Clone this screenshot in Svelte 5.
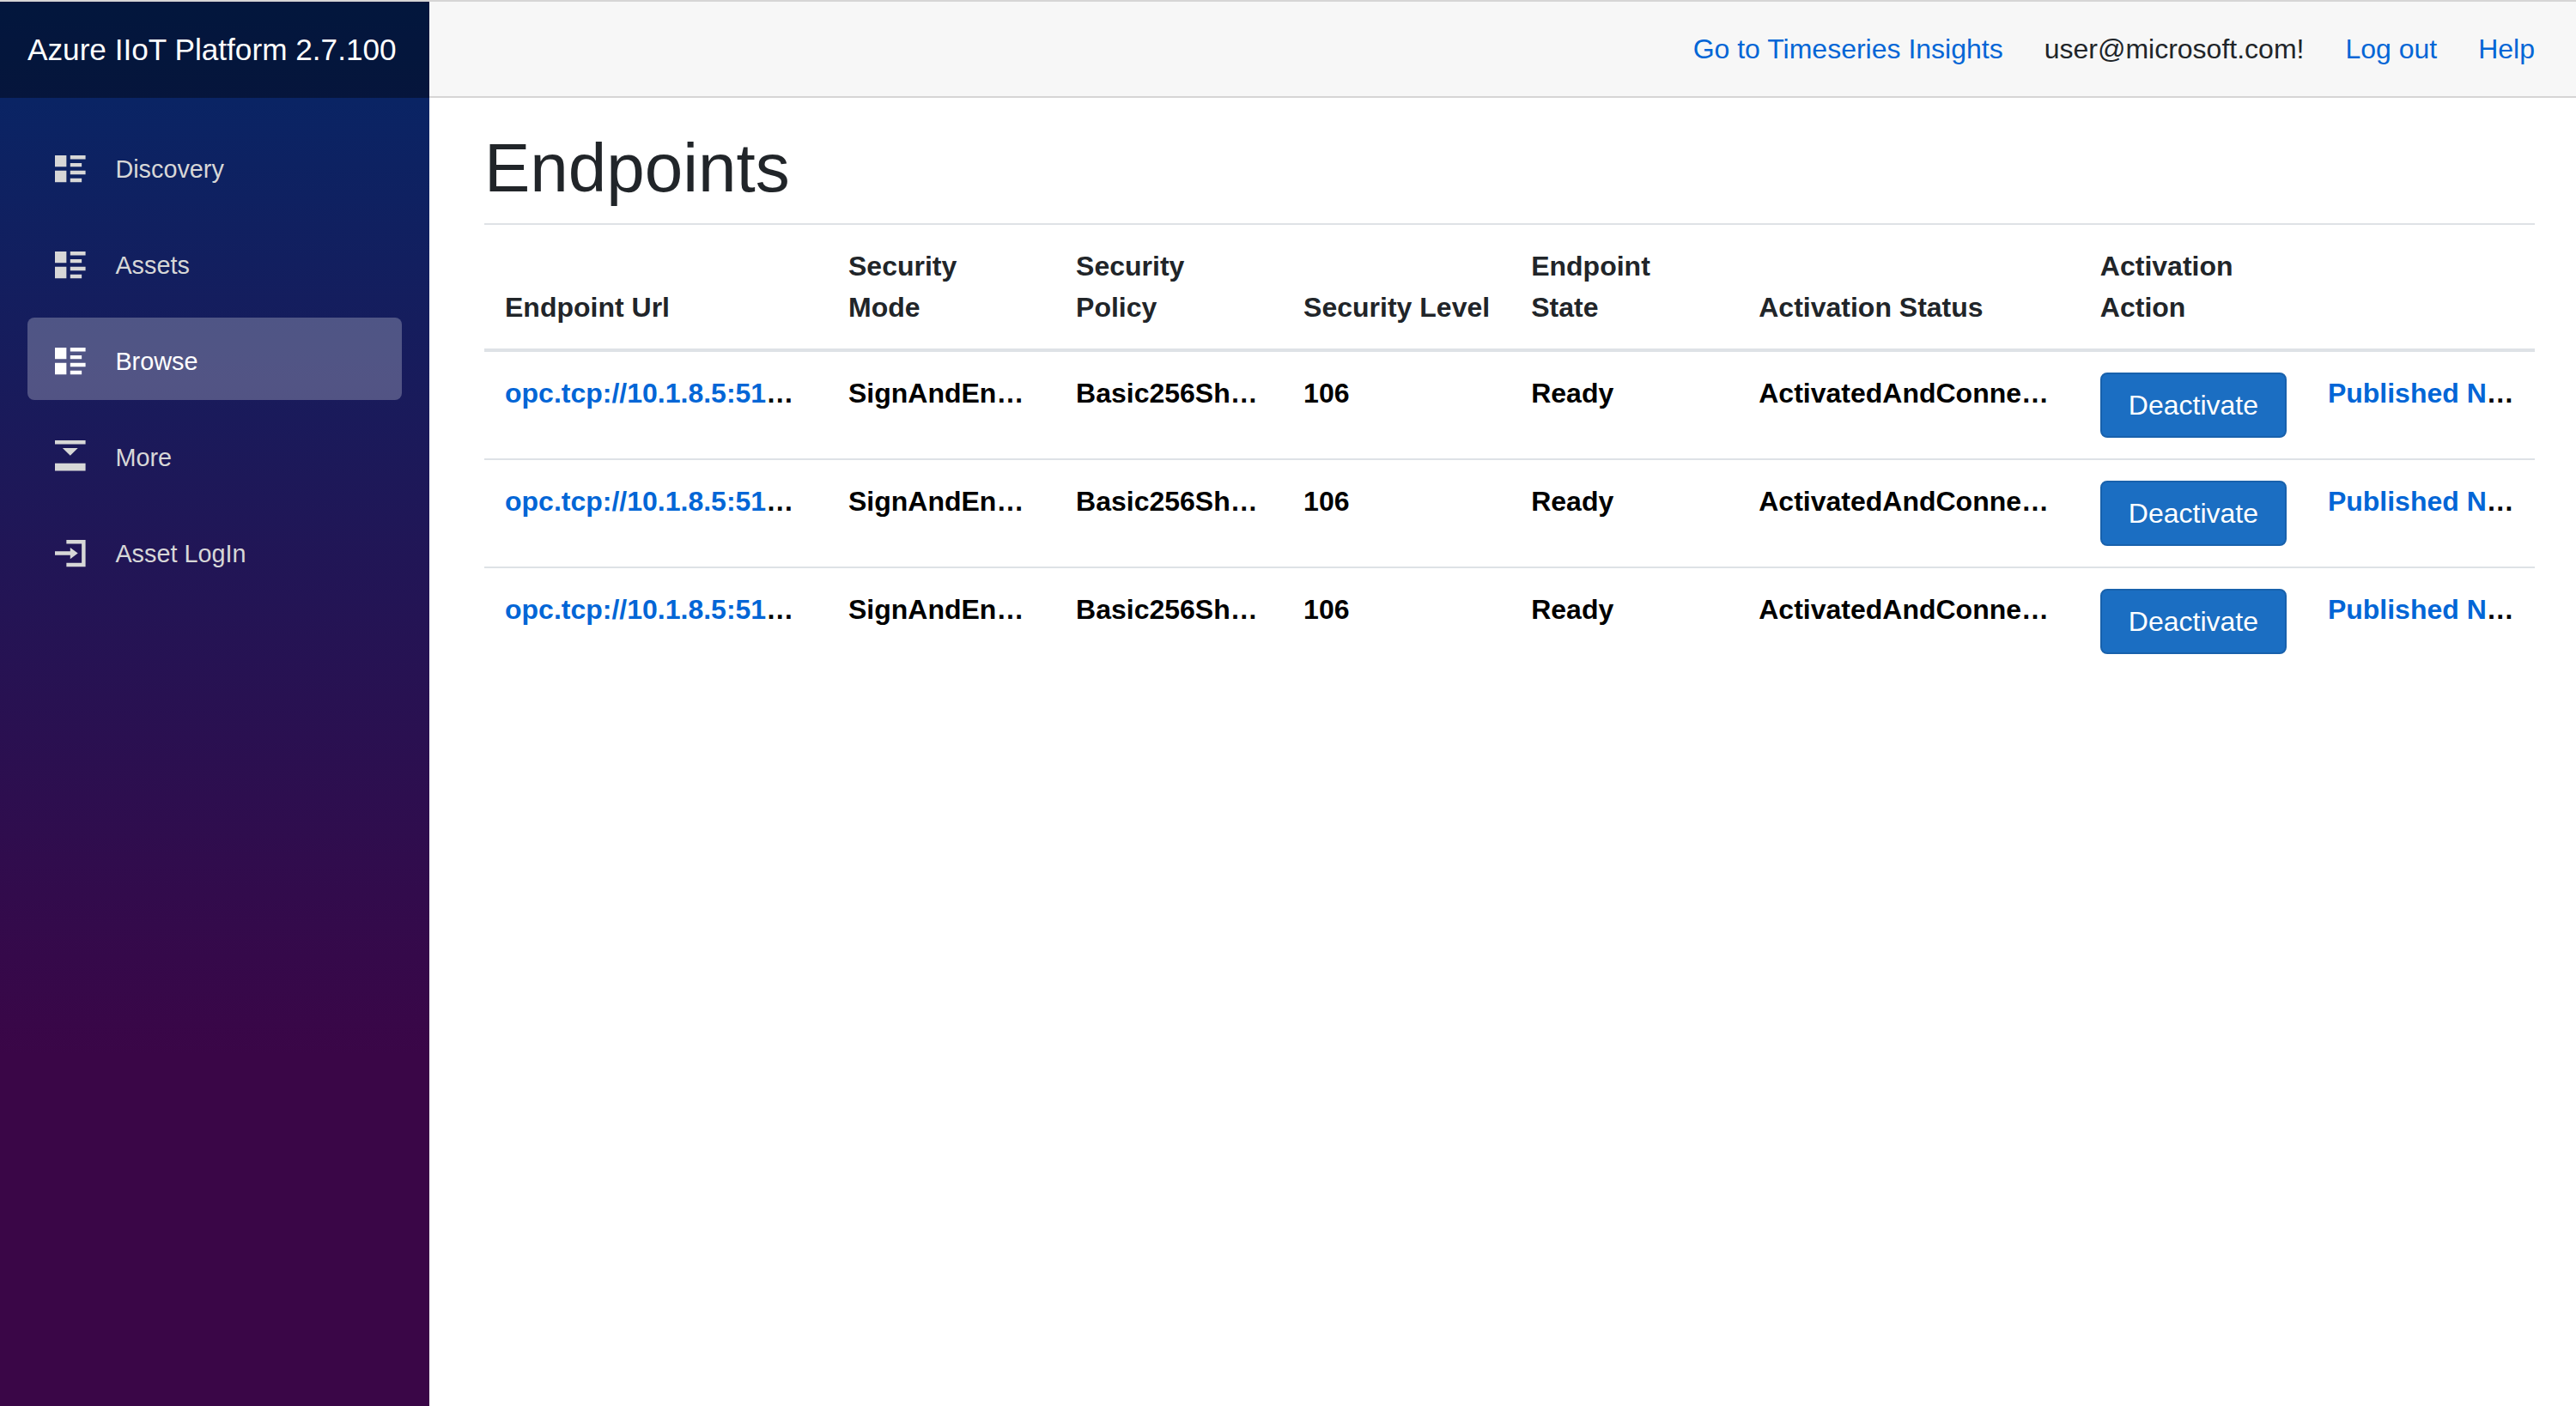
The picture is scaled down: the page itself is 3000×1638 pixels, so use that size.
<script>
	const navItems = [
		{ label: 'Discovery', icon: 'rich' },
		{ label: 'Assets', icon: 'rich' },
		{ label: 'Browse', icon: 'rich', active: true },
		{ label: 'More', icon: 'collapse' },
		{ label: 'Asset LogIn', icon: 'login' }
	];

	const icons = {
		rich: 'M0 0v3h3v-3h-3zm4 0v1h4v-1h-4zm0 2v1h3v-1h-3zm-4 2v3h3v-3h-3zm4 0v1h4v-1h-4zm0 2v1h3v-1h-3z',
		collapse: 'M0 0v1h8v-1h-8zm2 2l2 2 2-2h-4zm-2 4v2h8v-2h-8z',
		login: 'M3 0v1h4v5h-4v1h5v-7h-5zm1 2v1h-4v1h4v1l2-1.5-2-1.5z'
	};

	const endpoints = [
		{ url: 'opc.tcp://10.1.8.5:51210/UA/SampleServer' },
		{ url: 'opc.tcp://10.1.8.5:51210/UA/SampleServer' },
		{ url: 'opc.tcp://10.1.8.5:51210/UA/SampleServer' }
	];
</script>

<div class="page">
	<aside class="sidebar">
		<div class="brand">Azure IIoT Platform 2.7.100</div>
		<nav>
			{#each navItems as item}
				<a href="#top" class="nav-link" class:active={item.active}>
					<svg class="icon" class:tall={item.icon === 'collapse'} viewBox="0 0 8 8">
						<path d={icons[item.icon]} />
					</svg>
					<span>{item.label}</span>
				</a>
			{/each}
		</nav>
	</aside>

	<div class="main">
		<header class="top-row">
			<a href="#top">Go to Timeseries Insights</a>
			<span>user@microsoft.com!</span>
			<a href="#top">Log out</a>
			<a href="#top">Help</a>
		</header>

		<div class="content">
			<h1>Endpoints</h1>
			<table>
				<colgroup>
					<col class="url" />
					<col />
					<col />
					<col />
					<col />
					<col class="status" />
					<col />
					<col />
				</colgroup>
				<thead>
					<tr>
						<th>Endpoint Url</th>
						<th>Security Mode</th>
						<th>Security Policy</th>
						<th class="nowrap">Security Level</th>
						<th>Endpoint State</th>
						<th>Activation Status</th>
						<th>Activation Action</th>
						<th></th>
					</tr>
				</thead>
				<tbody>
					{#each endpoints as row}
						<tr>
							<td><a href="#top">{row.url}</a></td>
							<td>SignAndEncrypt</td>
							<td>Basic256Sha256</td>
							<td>106</td>
							<td>Ready</td>
							<td>ActivatedAndConnected</td>
							<td class="action"><button>Deactivate</button></td>
							<td><a href="#top">Published Nodes</a></td>
						</tr>
					{/each}
				</tbody>
			</table>
		</div>
	</div>
</div>

<style>
	:global(body) {
		margin: 0;
		background: #fff;
	}

	.page {
		display: flex;
		height: 1638px;
		overflow: hidden;
		font-family: 'Liberation Sans', Arial, sans-serif;
		font-size: 32px;
		line-height: 1.5;
		color: #212529;
	}

	a {
		color: #0366d6;
		text-decoration: none;
	}

	.sidebar {
		width: 500px;
		flex-shrink: 0;
		background: linear-gradient(180deg, #052767 0%, #3a0647 75%);
		border-top: 2px solid #d6d5d5;
	}

	.brand {
		height: 112px;
		padding-left: 32px;
		display: flex;
		align-items: center;
		box-sizing: border-box;
		background: rgba(0, 0, 0, 0.4);
		color: #fff;
		font-size: 35.2px;
		white-space: nowrap;
	}

	nav {
		display: flex;
		flex-direction: column;
		gap: 16px;
		padding: 32px;
	}

	.nav-link {
		height: 96px;
		display: flex;
		align-items: center;
		padding-left: 32px;
		border-radius: 8px;
		color: #d7d7d7;
		font-size: 28.8px;
	}

	.nav-link span {
		margin-top: 8px;
	}

	.nav-link.active {
		background: rgba(255, 255, 255, 0.25);
		color: #fff;
	}

	.icon {
		width: 35.6px;
		height: 35.6px;
		margin-right: 34.8px;
		margin-top: 10px;
		fill: currentColor;
		flex-shrink: 0;
	}

	.icon.tall {
		margin-top: 2px;
	}

	.main {
		flex: 1;
		min-width: 0;
	}

	.top-row {
		height: 114px;
		box-sizing: border-box;
		display: flex;
		justify-content: flex-end;
		align-items: center;
		gap: 48px;
		padding-right: 48px;
		background: #f7f7f7;
		border-top: 2px solid #d6d5d5;
		border-bottom: 2px solid #d6d5d5;
		white-space: nowrap;
	}

	.content {
		padding: 34px 48px 0 64px;
	}

	h1 {
		margin: 0 0 16px;
		font-size: 80px;
		font-weight: 400;
		line-height: 1.2;
	}

	table {
		width: 100%;
		table-layout: fixed;
		border-collapse: collapse;
	}

	col {
		width: 11.1%;
	}

	col.url {
		width: 16.75%;
	}

	col.status {
		width: 16.65%;
	}

	th {
		padding: 24px;
		text-align: left;
		vertical-align: bottom;
		font-weight: 700;
		border-top: 2px solid #dee2e6;
		border-bottom: 4px solid #dee2e6;
	}

	th.nowrap {
		white-space: nowrap;
	}

	td {
		padding: 24px;
		vertical-align: top;
		font-weight: 700;
		color: #000;
		border-top: 2px solid #dee2e6;
		white-space: nowrap;
		overflow: hidden;
		text-overflow: ellipsis;
	}

	tbody tr:first-child td {
		border-top: 0;
	}

	button {
		display: block;
		padding: 12px 31px;
		font: inherit;
		font-weight: 400;
		color: #fff;
		background: #1b6ec2;
		border: 2px solid #1861ac;
		border-radius: 8px;
	}
</style>
